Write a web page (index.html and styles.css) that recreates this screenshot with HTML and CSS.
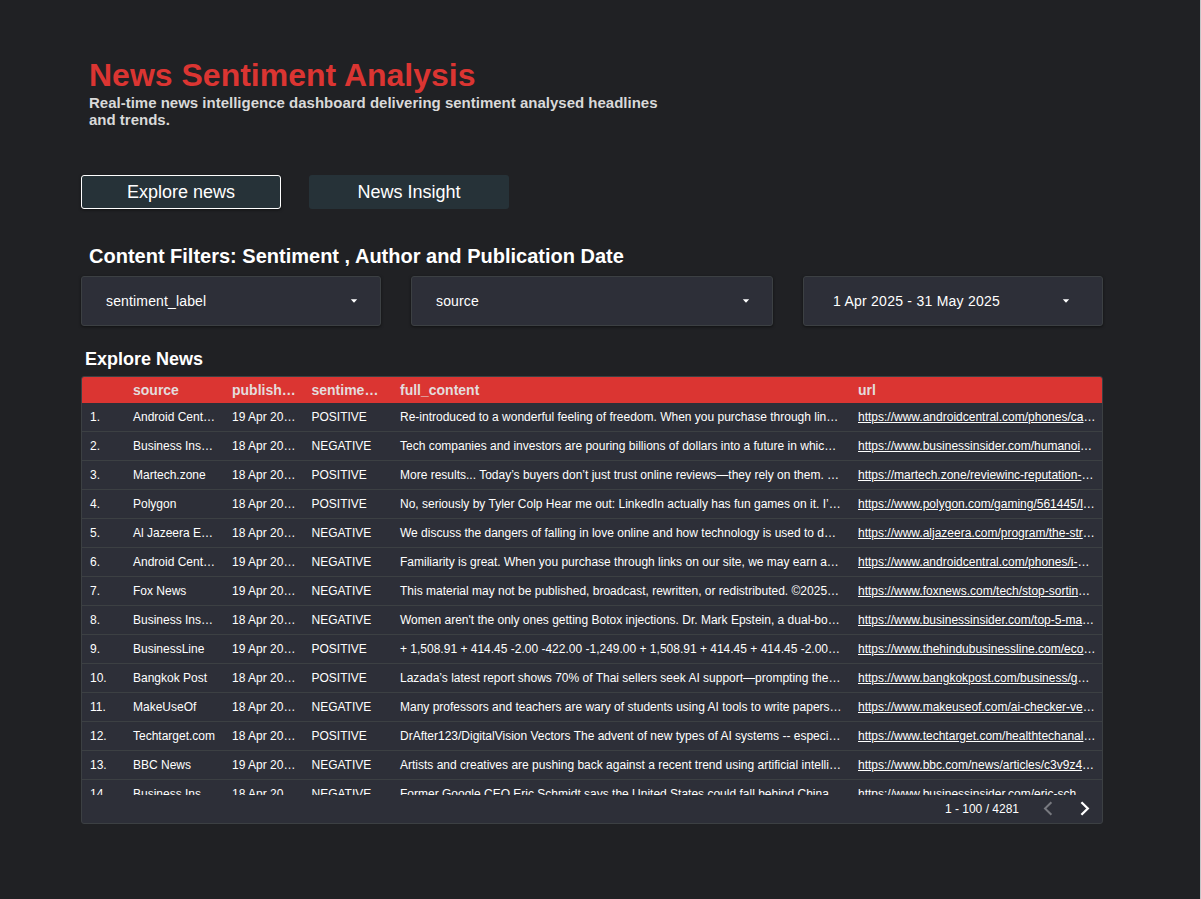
FILE: index.html
```
<!DOCTYPE html>
<html lang="en">
<head>
<meta charset="utf-8">
<title>News Sentiment Analysis</title>
<link rel="stylesheet" href="styles.css">
</head>
<body>
<main class="page">
  <header class="intro">
    <h1 class="title">News Sentiment Analysis</h1>
    <p class="subtitle">Real-time news intelligence dashboard delivering sentiment analysed headlines<br>and trends.</p>
  </header>
  <nav class="tabs">
    <button class="tab tab-active">Explore news</button>
    <button class="tab">News Insight</button>
  </nav>
  <h2 class="filters-title">Content Filters: Sentiment , Author and Publication Date</h2>
  <section class="filters">
    <div class="filter"><span>sentiment_label</span><svg class="caret" viewBox="0 0 8 4"><path d="M0.8 0.3H7.2L4 3.7Z"/></svg></div>
    <div class="filter"><span>source</span><svg class="caret" viewBox="0 0 8 4"><path d="M0.8 0.3H7.2L4 3.7Z"/></svg></div>
    <div class="filter filter-date"><span>1 Apr 2025 - 31 May 2025</span><svg class="caret" viewBox="0 0 8 4"><path d="M0.8 0.3H7.2L4 3.7Z"/></svg></div>
  </section>
  <h3 class="table-title">Explore News</h3>
  <section class="table">
    <div class="row head"><span></span><span>source</span><span>publish…</span><span>sentime…</span><span>full_content</span><span>url</span></div>
    <div class="rows">
      <div class="row"><span>1.</span><span>Android Cent…</span><span>19 Apr 20…</span><span>POSITIVE</span><span>Re-introduced to a wonderful feeling of freedom. When you purchase through lin…</span><span><a>https://www.androidcentral.com/phones/ca</a>…</span></div>
      <div class="row"><span>2.</span><span>Business Ins…</span><span>18 Apr 20…</span><span>NEGATIVE</span><span>Tech companies and investors are pouring billions of dollars into a future in whic…</span><span><a>https://www.businessinsider.com/humanoi</a>…</span></div>
      <div class="row"><span>3.</span><span>Martech.zone</span><span>18 Apr 20…</span><span>POSITIVE</span><span>More results... Today’s buyers don’t just trust online reviews—they rely on them. …</span><span><a>https://martech.zone/reviewinc-reputation-</a>…</span></div>
      <div class="row"><span>4.</span><span>Polygon</span><span>18 Apr 20…</span><span>POSITIVE</span><span>No, seriously by Tyler Colp Hear me out: LinkedIn actually has fun games on it. I’…</span><span><a>https://www.polygon.com/gaming/561445/l</a>…</span></div>
      <div class="row"><span>5.</span><span>Al Jazeera E…</span><span>18 Apr 20…</span><span>NEGATIVE</span><span>We discuss the dangers of falling in love online and how technology is used to d…</span><span><a>https://www.aljazeera.com/program/the-str</a>…</span></div>
      <div class="row"><span>6.</span><span>Android Cent…</span><span>19 Apr 20…</span><span>NEGATIVE</span><span>Familiarity is great. When you purchase through links on our site, we may earn a…</span><span><a>https://www.androidcentral.com/phones/i-</a>…</span></div>
      <div class="row"><span>7.</span><span>Fox News</span><span>19 Apr 20…</span><span>NEGATIVE</span><span>This material may not be published, broadcast, rewritten, or redistributed. ©2025…</span><span><a>https://www.foxnews.com/tech/stop-sortin</a>…</span></div>
      <div class="row"><span>8.</span><span>Business Ins…</span><span>18 Apr 20…</span><span>NEGATIVE</span><span>Women aren't the only ones getting Botox injections. Dr. Mark Epstein, a dual-bo…</span><span><a>https://www.businessinsider.com/top-5-ma</a>…</span></div>
      <div class="row"><span>9.</span><span>BusinessLine</span><span>19 Apr 20…</span><span>POSITIVE</span><span>+ 1,508.91 + 414.45 -2.00 -422.00 -1,249.00 + 1,508.91 + 414.45 + 414.45 -2.00…</span><span><a>https://www.thehindubusinessline.com/eco</a>…</span></div>
      <div class="row"><span>10.</span><span>Bangkok Post</span><span>18 Apr 20…</span><span>POSITIVE</span><span>Lazada’s latest report shows 70% of Thai sellers seek AI support—prompting the…</span><span><a>https://www.bangkokpost.com/business/g</a>…</span></div>
      <div class="row"><span>11.</span><span>MakeUseOf</span><span>18 Apr 20…</span><span>NEGATIVE</span><span>Many professors and teachers are wary of students using AI tools to write papers…</span><span><a>https://www.makeuseof.com/ai-checker-ve</a>…</span></div>
      <div class="row"><span>12.</span><span>Techtarget.com</span><span>18 Apr 20…</span><span>POSITIVE</span><span>DrAfter123/DigitalVision Vectors The advent of new types of AI systems -- especi…</span><span><a>https://www.techtarget.com/healthtechanal</a>…</span></div>
      <div class="row"><span>13.</span><span>BBC News</span><span>19 Apr 20…</span><span>NEGATIVE</span><span>Artists and creatives are pushing back against a recent trend using artificial intelli…</span><span><a>https://www.bbc.com/news/articles/c3v9z4</a>…</span></div>
      <div class="row"><span>14.</span><span>Business Ins…</span><span>18 Apr 20…</span><span>NEGATIVE</span><span>Former Google CEO Eric Schmidt says the United States could fall behind China…</span><span><a>https://www.businessinsider.com/eric-sch</a>…</span></div>
    </div>
    <footer class="pager">
      <span>1 - 100 / 4281</span>
      <svg class="chevron chevron-off" viewBox="0 0 10 16"><path d="M8.4 1.2L2 7.5L8.4 13.8"/></svg>
      <svg class="chevron" viewBox="0 0 10 16"><path d="M1.4 1.2L7.8 7.5L1.4 13.8"/></svg>
    </footer>
  </section>
</main>
</body>
</html>
```
FILE: styles.css
```
* { box-sizing: border-box; margin: 0; }
body {
  height: 899px;
  overflow: hidden;
  background: #202124;
  border-right: 1px solid #c4c5c7;
  color: #fff;
  font-family: "Liberation Sans", Arial, sans-serif;
}
.page { width: 1022px; margin-left: 81px; padding-top: 57px; }
.intro { padding-left: 8px; height: 118px; }
.title { font-size: 32px; line-height: 37px; color: #db3532; }
.subtitle { font-size: 15px; line-height: 17px; font-weight: 700; color: #d9d9d9; }
.tabs { display: flex; gap: 28px; }
.tab {
  width: 200px;
  height: 34px;
  padding: 0;
  border: 1px solid transparent;
  border-radius: 3px;
  background: #263238;
  color: #fff;
  font: 18px/32px "Liberation Sans", Arial, sans-serif;
}
.tab-active { border-color: #fff; box-shadow: 0 1px 3px rgba(0, 0, 0, .5); }
.filters-title { padding: 35px 0 0 8px; height: 67px; font-size: 20px; line-height: 24px; }
.filters { display: grid; grid-template-columns: 300px 362px 300px; gap: 30px; }
.filter {
  display: flex;
  align-items: center;
  justify-content: space-between;
  height: 50px;
  padding: 0 22.5px 0 24px;
  border: 1px solid #3c4043;
  border-radius: 3px;
  background: #2d2f38;
  box-shadow: 0 1px 3px rgba(0, 0, 0, .5);
  font-size: 14px;
  letter-spacing: .15px;
}
.filter-date { padding: 0 32px 0 29px; letter-spacing: .25px; }
.caret { width: 8px; height: 4px; fill: #fff; }
.table-title { padding: 22px 0 0 4px; height: 50px; font-size: 18px; line-height: 22px; }
.table {
  height: 448px;
  overflow: hidden;
  border: 1px solid #3c4043;
  border-radius: 3px;
  background: #2d2f38;
}
.row {
  display: grid;
  grid-template-columns: 43px 99px 79.5px 88.5px 458px 252px;
  height: 29px;
  padding-left: 8px;
  border-bottom: 1px solid #3c4043;
  font-size: 12px;
  line-height: 28px;
  white-space: nowrap;
}
.head {
  height: 26px;
  border-bottom: 0;
  background: #db3532;
  color: #e4dcdc;
  font-size: 14px;
  font-weight: 700;
  line-height: 27px;
}
.rows { height: 392px; overflow: hidden; }
.row a { text-decoration: underline; }
.pager {
  display: flex;
  align-items: center;
  justify-content: flex-end;
  height: 28px;
  padding-right: 12px;
  font-size: 12px;
}
.chevron { width: 10px; height: 16px; margin-left: 27px; fill: none; stroke: #fff; stroke-width: 2.3; }
.chevron-off { margin-left: 24px; stroke: #77797f; stroke-width: 2; }
```
